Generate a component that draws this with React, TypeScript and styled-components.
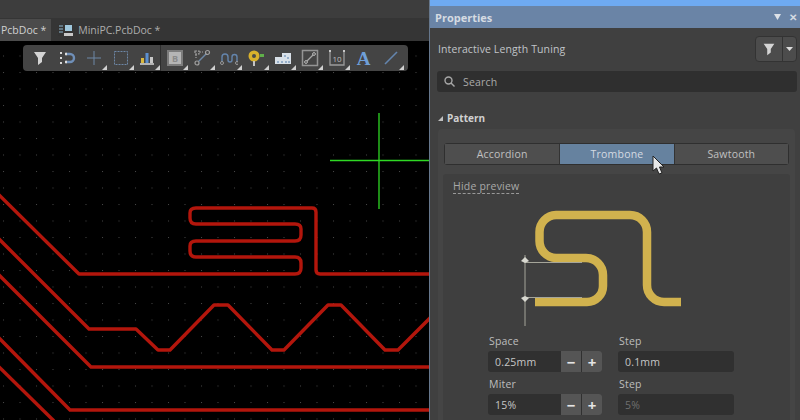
import React from "react";
import styled, { createGlobalStyle } from "styled-components";

const Global = createGlobalStyle`
  html, body { margin: 0; padding: 0; background: #000; }
  body { font-family: "Open Sans", "Noto Sans", sans-serif; }
`;

const Page = styled.div`
  width: 800px; height: 420px; display: flex; overflow: hidden;
`;
const Workspace = styled.div`
  width: 429px; flex: none; display: flex; flex-direction: column;
  border-right: 1px solid #66778c;
`;
const TitleStrip = styled.div`height: 18px; flex: none; background: #3d3d3d;`;
const TabBar = styled.div`
  height: 23px; flex: none; background: #353535; display: flex; align-items: stretch;
`;
const Tab = styled.div<{ $active?: boolean }>`
  display: flex; align-items: center; gap: 5px; font-size: 10.5px; font-weight: 400;
  padding: ${p => (p.$active ? "0 5px 0 1px" : "0 0 0 7px")};
  background: ${p => (p.$active ? "#4b4b4b" : "transparent")};
  color: ${p => (p.$active ? "#d0d0d0" : "#adadad")};
  margin-top: 1px;
`;
const Canvas = styled.div`position: relative; flex: 1; background: #000; overflow: hidden;`;
const Board = styled.svg`display: block; width: 429px; height: 379px;`;
const Toolbar = styled.div`
  position: absolute; left: 23px; top: 4px; width: 385px; height: 26px; box-sizing: border-box;
  padding-left: 3px; display: flex; background: #444; border-radius: 4px;
`;
const ToolButton = styled.div<{ $more?: boolean; $divider?: boolean }>`
  position: relative; width: 27px; height: 26px; flex: none; display: flex;
  align-items: center; justify-content: center; box-sizing: border-box;
  ${p => (p.$divider ? "border-right: 1px solid #2e2e2e;" : "")}
  ${p => (p.$more ? `&::after {
    content: ""; position: absolute; right: 0; bottom: 1px; width: 0; height: 0;
    border-left: 5px solid transparent; border-bottom: 5px solid #d0d0d0;
  }` : "")}
`;
const TextTool = styled.span`
  font-family: "Liberation Serif", serif; font-weight: 700; font-size: 19px; color: #6f9fd8; line-height: 1;
`;
const Panel = styled.div`
  width: 370px; flex: none; background: #404040; display: flex; flex-direction: column;
`;
const BlueStrip = styled.div`height: 6px; flex: none; background: #6eaaf2;`;
const PanelHead = styled.div`
  height: 22px; flex: none; background: #6a84a6; display: flex; align-items: center;
  justify-content: space-between; padding: 0 3px 0 5px; color: #d5dbe2;
  font-size: 11px; font-weight: 700;
`;
const HeadControls = styled.div`display: flex; align-items: center; gap: 8px; font-size: 10px;`;
const PanelBody = styled.div`display: flex; flex-direction: column; padding: 8px 3px 0 7px;`;
const ContextRow = styled.div`
  display: flex; align-items: center; justify-content: space-between; height: 26px;
  color: #c0c4c8; font-size: 10.5px; letter-spacing: 0.12px; padding-left: 1px;
`;
const FilterGroup = styled.div`
  display: flex; height: 26px; width: 42px; box-sizing: border-box; background: #4c4c4c;
  border: 1px solid #333; border-radius: 4px;
`;
const FilterMain = styled.div`
  flex: 1; display: flex; align-items: center; justify-content: center; border-right: 1px solid #333;
`;
const FilterCaret = styled.div`width: 13px; display: flex; align-items: center; justify-content: center;`;
const SearchBox = styled.div`
  margin-top: 9px; height: 21px; background: #2f2f2f; border-radius: 3px; display: flex;
  align-items: center; gap: 8px; padding-left: 7px; color: #aaa; font-size: 10.5px; letter-spacing: .2px;
`;
const SectionHead = styled.div`
  margin-top: 18px; display: flex; align-items: center; gap: 4px; height: 16px;
  color: #d0d0d0; font-size: 10px; font-weight: 700; padding-left: 1px;
`;
const Card = styled.div`
  margin-top: 3px; background: #454545; border-radius: 4px; padding: 14px 6px 0 6px;
  width: 357px; box-sizing: border-box; margin-left: 1px;
`;
const Segments = styled.div`
  position: relative; display: grid; grid-template-columns: repeat(3, 1fr); height: 22px; width: 345px;
  border: 1px solid #2f2f2f; border-radius: 3px; box-sizing: border-box; overflow: visible;
`;
const Segment = styled.div<{ $active?: boolean }>`
  display: flex; align-items: center; justify-content: center; font-size: 10.5px; letter-spacing: .2px;
  color: ${p => (p.$active ? "#d4dae2" : "#c0c0c0")};
  background: ${p => (p.$active ? "#66829f" : "#4e4e4e")};
  & + & { border-left: 1px solid #333; }
`;
const Pointer = styled.svg`position: absolute; left: 207px; top: 11px; width: 13px; height: 21px;`;
const Inner = styled.div`
  margin-top: 9px; width: 347px; margin-left: -1px; background: #3f3f3f; border-radius: 3px;
  padding-top: 5px; height: 260px; box-sizing: border-box;
`;
const PreviewToggle = styled.div`
  width: fit-content; margin-left: 10px; font-size: 10.5px; line-height: 14px; color: #a9a9a9;
  letter-spacing: .2px; border-bottom: 1px dashed #999;
`;
const Preview = styled.svg`display: block; width: 347px; height: 133px; margin-top: 6px;`;
const Fields = styled.div`
  display: grid; grid-template-columns: 114px 116px; column-gap: 16px; margin-left: 45px; margin-top: 1px;
`;
const Field = styled.div`display: flex; flex-direction: column;`;
const FieldLabel = styled.div`
  font-size: 10.5px; line-height: 14px; height: 17px; color: #bdbdbd; letter-spacing: .2px; padding-left: 1px;
`;
const InputWrap = styled.div`
  display: flex; height: 21px; background: #303030; border-radius: 3px; margin-bottom: 5px; overflow: hidden;
`;
const InputValue = styled.div<{ $dim?: boolean }>`
  flex: 1; display: flex; align-items: center; padding-left: 7px; font-size: 10.5px;
  color: ${p => (p.$dim ? "#6f6f6f" : "#c6c6c6")}; letter-spacing: .2px;
`;
const Stepper = styled.div`
  width: 20px; flex: none; display: flex; align-items: center; justify-content: center;
  background: #555; color: #e4e4e4; font-size: 15px; font-weight: 700; margin-left: 1px;
`;

const Icons: Record<string, React.ReactNode> = {
  filter: <path d="M3 3h12l-4 6v4l-4 3V9z" fill="#d4d4d4" />,
  snap: (
    <g fill="none">
      <path d="M2 4h2M2 9h2M2 14h2" stroke="#d8d8d8" strokeWidth="2" />
      <path d="M8 5h4a4 4 0 0 1 0 8H8" stroke="#6f8fb8" strokeWidth="2.400" />
      <path d="M7 5h2M7 13h2" stroke="#dcdcdc" strokeWidth="2.400" />
    </g>
  ),
  cross: <path d="M9 2v14M2 9h14" stroke="#6d87a6" strokeWidth="1" />,
  dashed: <rect x="2.500" y="2.500" width="13" height="13" fill="none" stroke="#6d87a6" strokeWidth="1" strokeDasharray="2 1" />,
  bars: (
    <g>
      <path d="M2 15h14" stroke="#d8d8d8" strokeWidth="1.500" />
      <rect x="3" y="9" width="3" height="5" fill="#d9b83f" />
      <rect x="7.500" y="4" width="3" height="10" fill="#5b8fd0" />
      <rect x="12" y="8" width="3" height="6" fill="#c8c8c8" />
    </g>
  ),
  chip: (
    <g>
      <rect x="1" y="1" width="16" height="16" fill="#7c7c7c" />
      <rect x="3" y="3" width="12" height="12" fill="#b5b5b5" />
      <text x="9" y="12.500" fontSize="9" fontWeight="700" textAnchor="middle" fill="#8a8a8a" fontFamily="Open Sans">B</text>
    </g>
  ),
  route: (
    <g fill="none" stroke="#a0a0a0" strokeWidth="1.200">
      <path d="M5.500 12.500 13 5" stroke="#6d87a6" strokeWidth="1.500" />
      <circle cx="4" cy="14" r="2" /><circle cx="14.500" cy="3.500" r="2" />
      <path d="M2 2h4v3H2zM3 5v4M6 3h4" strokeDasharray="2 1" />
    </g>
  ),
  tune: (
    <g fill="none">
      <path d="M2 13V8a3 3 0 0 1 6 0v3a2 2 0 0 0 4 0V8a2.500 2.500 0 0 1 5 0v5" stroke="#6485ad" strokeWidth="1.400" />
      <circle cx="2" cy="14" r="1.500" stroke="#999" /><circle cx="17" cy="14" r="1.500" stroke="#999" />
    </g>
  ),
  pin: (
    <g>
      <circle cx="7" cy="7" r="5.500" fill="#d9b12c" />
      <circle cx="7" cy="7" r="2" fill="#4a4a4a" />
      <rect x="6" y="12" width="2" height="5" fill="#c4c4c4" />
      <path d="M13 5h4v3h-4z" fill="#5fb04a" />
    </g>
  ),
  stairs: (
    <g>
      <path d="M1 8h7V4h9v11H1z" fill="#d8e0e8" />
      <path d="M3 13h2M7 13h2M11 13h2M14 13h2M10 7h2M13 9h2" stroke="#7f9dbf" strokeWidth="1.500" />
    </g>
  ),
  track: (
    <g fill="none">
      <rect x="1.500" y="1.500" width="15" height="15" stroke="#949494" strokeWidth="1.500" />
      <path d="M6 12 12 6" stroke="#a8a8a8" strokeWidth="1.200" />
      <circle cx="5" cy="13" r="1.400" stroke="#bbb" /><circle cx="13" cy="5" r="1.400" stroke="#bbb" />
    </g>
  ),
  room: (
    <g fill="none">
      <path d="M2 3v13h14V3" stroke="#9a9a9a" strokeWidth="1.300" />
      <path d="M1 2h2M15 2h2" stroke="#c8c8c8" strokeWidth="2" />
      <text x="9" y="13" fontSize="8" textAnchor="middle" fill="#bdbdbd" fontFamily="Open Sans">10</text>
    </g>
  ),
  line: <path d="M3 15 15 3" stroke="#6485ad" strokeWidth="1.600" />,
};

const Icon = ({ name, size = 18 }: { name: string; size?: number }) => (
  <svg width={size} height={size} viewBox="0 0 18 18">{Icons[name]}</svg>
);

const tools: { name: string; more?: boolean; divider?: boolean }[] = [
  { name: "filter" }, { name: "snap" }, { name: "cross", more: true }, { name: "dashed", more: true },
  { name: "bars", more: true, divider: true }, { name: "chip", more: true }, { name: "route", more: true },
  { name: "tune", more: true }, { name: "pin", more: true }, { name: "stairs", more: true },
  { name: "track", more: true }, { name: "room", more: true }, { name: "text" }, { name: "line", more: true },
];

const App = () => (
  <Page>
    <Global />
    <Workspace>
      <TitleStrip />
      <TabBar>
        <Tab $active>PcbDoc *</Tab>
        <Tab>
          <svg width="15" height="12" viewBox="0 0 15 12">
            <rect width="15" height="12" fill="#333" />
            <path d="M1 2h4M1 5h4M1 8h4" stroke="#8fb8d0" strokeWidth="1" />
            <rect x="7" y="1" width="7" height="6" fill="#9fc7dc" />
            <rect x="6" y="9" width="9" height="3" fill="#c8c8c8" />
          </svg>
          MiniPC.PcbDoc *
        </Tab>
      </TabBar>
      <Canvas>
        <Board viewBox="0 41 429 379">
          <defs>
            <pattern id="dots" x="3" y="6" width="16.500" height="16.500" patternUnits="userSpaceOnUse">
              <rect width="1" height="1" fill="#474747" />
            </pattern>
          </defs>
          <rect x="0" y="41" width="429" height="379" fill="url(#dots)" />
          <g fill="none" stroke="#b3160c" strokeWidth="3.400" strokeLinejoin="round">
            <path d="M-2 194 79 274H295Q301 274 301 268V263Q301 257 295 257H196Q190 257 190 251V246Q190 241 196 241H295Q301 241 301 235V229Q301 224 295 224H196Q190 224 190 218V213Q190 208 196 208H312Q316 208 316 212V270Q316 274 320 274H430" />
            <path d="M-2 238 89 329H136L158 350H170L214 305H228L272 350H284L328 305H341L385 350H398L431 317" />
            <path d="M-2 274 91 367H430" />
            <path d="M-2 337 70 410H430" />
            <path d="M-2 366 54 421" />
          </g>
          <path d="M330 160.500H429M379 113V209" stroke="#2fd824" strokeWidth="1.300" />
        </Board>
        <Toolbar>
          {tools.map(t => (
            <ToolButton key={t.name} $more={t.more} $divider={t.divider}>
              {t.name === "text" ? <TextTool>A</TextTool> : <Icon name={t.name} />}
            </ToolButton>
          ))}
        </Toolbar>
      </Canvas>
    </Workspace>
    <Panel>
      <BlueStrip />
      <PanelHead>
        Properties
        <HeadControls>
          <svg width="7" height="6" viewBox="0 0 7 6"><path d="M0 0h7L3.500 6z" fill="#dde2e8" /></svg>
          <span>✕</span>
        </HeadControls>
      </PanelHead>
      <PanelBody>
        <ContextRow>
          Interactive Length Tuning
          <FilterGroup>
            <FilterMain><Icon name="filter" size={16} /></FilterMain>
            <FilterCaret>
              <svg width="7" height="4" viewBox="0 0 7 4"><path d="M0 0h7L3.500 4z" fill="#ddd" /></svg>
            </FilterCaret>
          </FilterGroup>
        </ContextRow>
        <SearchBox>
          <svg width="11" height="11" viewBox="0 0 11 11" fill="none" stroke="#a8a8a8" strokeWidth="1.400">
            <circle cx="4.500" cy="4.500" r="3.500" /><path d="M7 7l3.500 3.500" />
          </svg>
          Search
        </SearchBox>
        <SectionHead>
          <svg width="5" height="5" viewBox="0 0 5 5"><path d="M5 0v5H0z" fill="#c0c0c0" /></svg>
          Pattern
        </SectionHead>
        <Card>
          <Segments>
            <Segment>Accordion</Segment>
            <Segment $active>Trombone</Segment>
            <Segment>Sawtooth</Segment>
            <Pointer viewBox="0 0 13 21">
              <path d="M1 1v15l3.500-3 2.500 6 3-1-2.500-6H12z" fill="#e8e8e8" stroke="#222" strokeWidth="1" />
            </Pointer>
          </Segments>
          <Inner>
            <PreviewToggle>Hide preview</PreviewToggle>
            <Preview viewBox="443 200 347 133">
              <path d="M535 302H587A16 16 0 0 0 603 286V275A17 17 0 0 0 586 258H556A17 17 0 0 1 539.500 241V232A17 17 0 0 1 556 215H630A17 17 0 0 1 647 232V285A17 17 0 0 0 664 302H681" fill="none" stroke="#d1b24e" strokeWidth="8.500" />
              <path d="M525 255V326M525 262.500H582M525 297.500H582" fill="none" stroke="#a5a59a" strokeWidth="1" />
              <path d="M521 261l4 2 4-2-4-4zM521 298l4-2 4 2-4 4z" fill="#d8d8d0" />
            </Preview>
            <Fields>
              <Field>
                <FieldLabel>Space</FieldLabel>
                <InputWrap>
                  <InputValue>0.25mm</InputValue>
                  <Stepper>−</Stepper>
                  <Stepper>+</Stepper>
                </InputWrap>
              </Field>
              <Field>
                <FieldLabel>Step</FieldLabel>
                <InputWrap><InputValue>0.1mm</InputValue></InputWrap>
              </Field>
              <Field>
                <FieldLabel>Miter</FieldLabel>
                <InputWrap>
                  <InputValue>15%</InputValue>
                  <Stepper>−</Stepper>
                  <Stepper>+</Stepper>
                </InputWrap>
              </Field>
              <Field>
                <FieldLabel>Step</FieldLabel>
                <InputWrap><InputValue $dim>5%</InputValue></InputWrap>
              </Field>
            </Fields>
          </Inner>
        </Card>
      </PanelBody>
    </Panel>
  </Page>
);

export default App;
